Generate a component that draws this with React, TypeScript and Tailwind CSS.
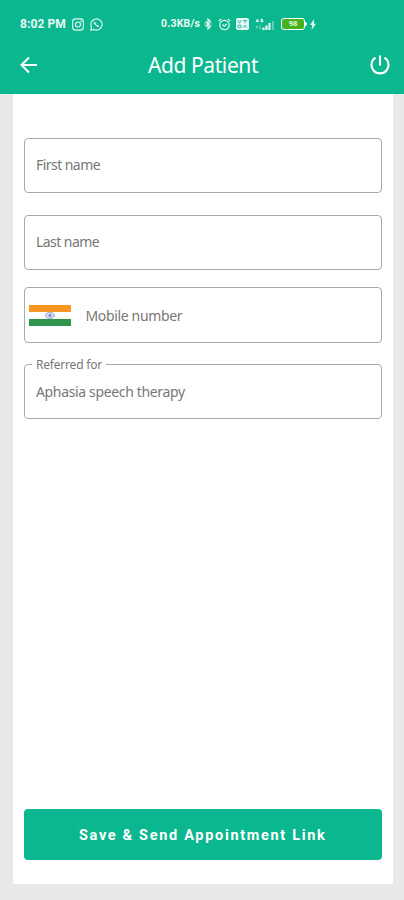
import type { ReactNode } from "react";

function InstagramIcon() {
  return (
    <svg className="h-[13px] w-3" viewBox="0 0 12 13" fill="none" stroke="currentColor" strokeWidth="1.1">
      <rect x="0.7" y="0.9" width="10.6" height="11.2" rx="2.8" />
      <circle cx="6" cy="6.5" r="2.5" />
      <circle cx="9" cy="3.3" r="0.3" />
    </svg>
  );
}

function WhatsappIcon() {
  return (
    <svg className="h-[13px] w-[13px]" viewBox="0 0 13 13" fill="none" stroke="currentColor" strokeWidth="1.1">
      <path d="M0.8 12.2l.8-3A5.6 5.6 0 1 1 3.8 11.4z" />
      <path d="M4.5 3.8c-.7.7-.5 1.9.9 3.3s2.9 2 3.7 1.2l-1.3-1-.8.5L5.3 6l.4-.8z" fill="currentColor" strokeWidth="0.5" />
    </svg>
  );
}

function BluetoothIcon() {
  return (
    <svg className="h-3 w-2" viewBox="0 0 8 12" fill="none" stroke="currentColor" strokeWidth="1.2">
      <path d="M1.5 3.5l5 5L4 11V1l2.5 2.5-5 5" />
      <path d="M0.3 6h1.2M6.5 6h1.2" />
    </svg>
  );
}

function AlarmIcon() {
  return (
    <svg className="h-[13px] w-[13px]" viewBox="0 0 13 13" fill="none" stroke="currentColor" strokeWidth="1.2">
      <circle cx="6.5" cy="7" r="4.7" />
      <path d="M0.8 3l2.4-2M12.2 3L9.8 1M4.5 6.5l1.7 1.7L8.8 6" />
    </svg>
  );
}

function VolteIcon() {
  return (
    <svg className="h-3 w-[13px]" viewBox="0 0 13 12" fill="none">
      <rect width="13" height="12" rx="1.8" fill="currentColor" />
      <path d="M2 2.2l1.5 3L5 2.2M7 2.5h4M9 2.5v2.8M2 7.2h3v2.5H2zM7.5 9.8L9 7l1.5 2.8" stroke="#0bb78f" strokeWidth="0.8" />
    </svg>
  );
}

function SignalIcon() {
  return (
    <svg className="h-[13px] w-5" viewBox="0 0 20 13" fill="none" stroke="currentColor">
      <path d="M2.8 0.8L1 3.3h2.5M3 2v2.3M8 1.3H6v2.5h2V2.7H7" strokeWidth="1" />
      <path d="M2 8v3M1 9l1-1 1 1M5 7v4M4 10l1 1 1-1" strokeWidth="0.6" opacity="0.7" />
      <path d="M8.5 12V9.5M11.5 12V7.5M14.5 12V5" strokeWidth="2.2" />
      <path d="M18 12V3" strokeWidth="1.5" opacity="0.5" />
    </svg>
  );
}

function Battery() {
  return (
    <div className="flex items-center">
      <div className="flex h-3 w-6 items-center justify-center rounded-[3px] border border-white bg-[#43b51b] font-['Roboto'] text-[7.5px] leading-none font-bold">
        98
      </div>
      <div className="h-1 w-[2px] rounded-r-sm bg-white" />
      <svg className="ml-[3px] h-[11px] w-[6px]" viewBox="0 0 6 11" fill="currentColor">
        <path d="M4.3 0L0 6h2.3L1.5 11 6 4.8H3.7z" />
      </svg>
    </div>
  );
}

function StatusBar() {
  return (
    <div className="flex h-12 items-center pl-5 text-white/90">
      <span className="w-[52px] font-['Roboto'] text-[12px] font-bold tracking-[0.1px] whitespace-nowrap">8:02 PM</span>
      <InstagramIcon />
      <span className="ml-[6px]"><WhatsappIcon /></span>
      <span className="ml-[58px] w-[43px] font-['Roboto'] text-[10.5px] font-bold tracking-[0.2px] whitespace-nowrap">0.3KB/s</span>
      <BluetoothIcon />
      <span className="ml-[6px]"><AlarmIcon /></span>
      <span className="ml-[5px]"><VolteIcon /></span>
      <span className="ml-[6px]"><SignalIcon /></span>
      <span className="ml-[6px]"><Battery /></span>
    </div>
  );
}

function AppBar() {
  return (
    <div className="flex h-9 items-center justify-between pr-[14px] pl-5 text-white">
      <svg className="-mt-[3px] h-[18px] w-[18px]" viewBox="0 0 18 18" fill="none" stroke="currentColor" strokeWidth="2">
        <path d="M17 9H2M9 1.5L1.5 9 9 16.5" />
      </svg>
      <h1 className="-ml-[2px] text-[21px] tracking-[-0.4px]">Add Patient</h1>
      <svg className="-mt-[3px] h-5 w-5" viewBox="0 0 20 20" fill="none" stroke="currentColor" strokeWidth="2.1">
        <path d="M10 0.5v10M5.5 2.7a8.5 8.5 0 1 0 9 0" />
      </svg>
    </div>
  );
}

function IndiaFlag() {
  return (
    <svg className="h-[21px] w-[42px]" viewBox="0 0 42 21">
      <rect width="42" height="7" fill="#fb9522" />
      <rect y="7" width="42" height="7" fill="#fff" />
      <rect y="14" width="42" height="7" fill="#2f944c" />
      <ellipse cx="21" cy="10.5" rx="4.5" ry="2.9" fill="#eef1fa" stroke="#8b9bcb" strokeWidth="0.9" />
      <path d="M17 10.5h8M21 8v5M18.5 8.8l5 3.4M18.5 12.2l5-3.4" stroke="#8b9bcb" strokeWidth="0.5" />
      <circle cx="21" cy="10.5" r="1.2" fill="#7386bd" />
    </svg>
  );
}

function Field({ children, className = "" }: { children: ReactNode; className?: string }) {
  return (
    <div className={`flex shrink-0 items-center rounded-[4px] border border-[#a9a9a9] text-[14px] text-[#777] ${className}`}>
      {children}
    </div>
  );
}

export default function App() {
  return (
    <div className="flex h-[900px] w-[404px] flex-col overflow-hidden bg-[#e9e9e9] font-['Noto_Sans','Open_Sans',sans-serif]">
      <header className="h-[94px] shrink-0 bg-[#0bb78f]">
        <StatusBar />
        <AppBar />
      </header>

      <main className="mr-[11px] ml-[12.5px] flex h-[790px] flex-col bg-white px-[11px] pt-11">
        <Field className="h-[55px] px-[11.5px]">
          <span className="-mt-[3px] tracking-[-0.55px]">First name</span>
        </Field>
        <Field className="mt-[22px] h-[55px] px-[11.5px]">
          <span className="-mt-[3px] tracking-[-0.55px]">Last name</span>
        </Field>
        <Field className="mt-[17px] h-[56px] pl-1">
          <IndiaFlag />
          <span className="ml-[15px] tracking-[-0.35px]">Mobile number</span>
        </Field>

        <fieldset className="mt-[14px] h-[62px] rounded-[4px] border border-[#a9a9a9] pl-[7.5px] text-[#777]">
          <legend className="h-[14px] px-1 text-[12px] leading-[15px] tracking-[-0.2px]">Referred for</legend>
          <p className="ml-1 pt-[11px] text-[14px] leading-5 tracking-[-0.35px]">Aphasia speech therapy</p>
        </fieldset>

        <button className="mt-auto mb-6 h-[51px] shrink-0 rounded-[4px] bg-[#0bb78f] pt-[3px] font-['Roboto'] text-[14.5px] font-bold tracking-[1.68px] text-white">
          Save &amp; Send Appointment Link
        </button>
      </main>
    </div>
  );
}
